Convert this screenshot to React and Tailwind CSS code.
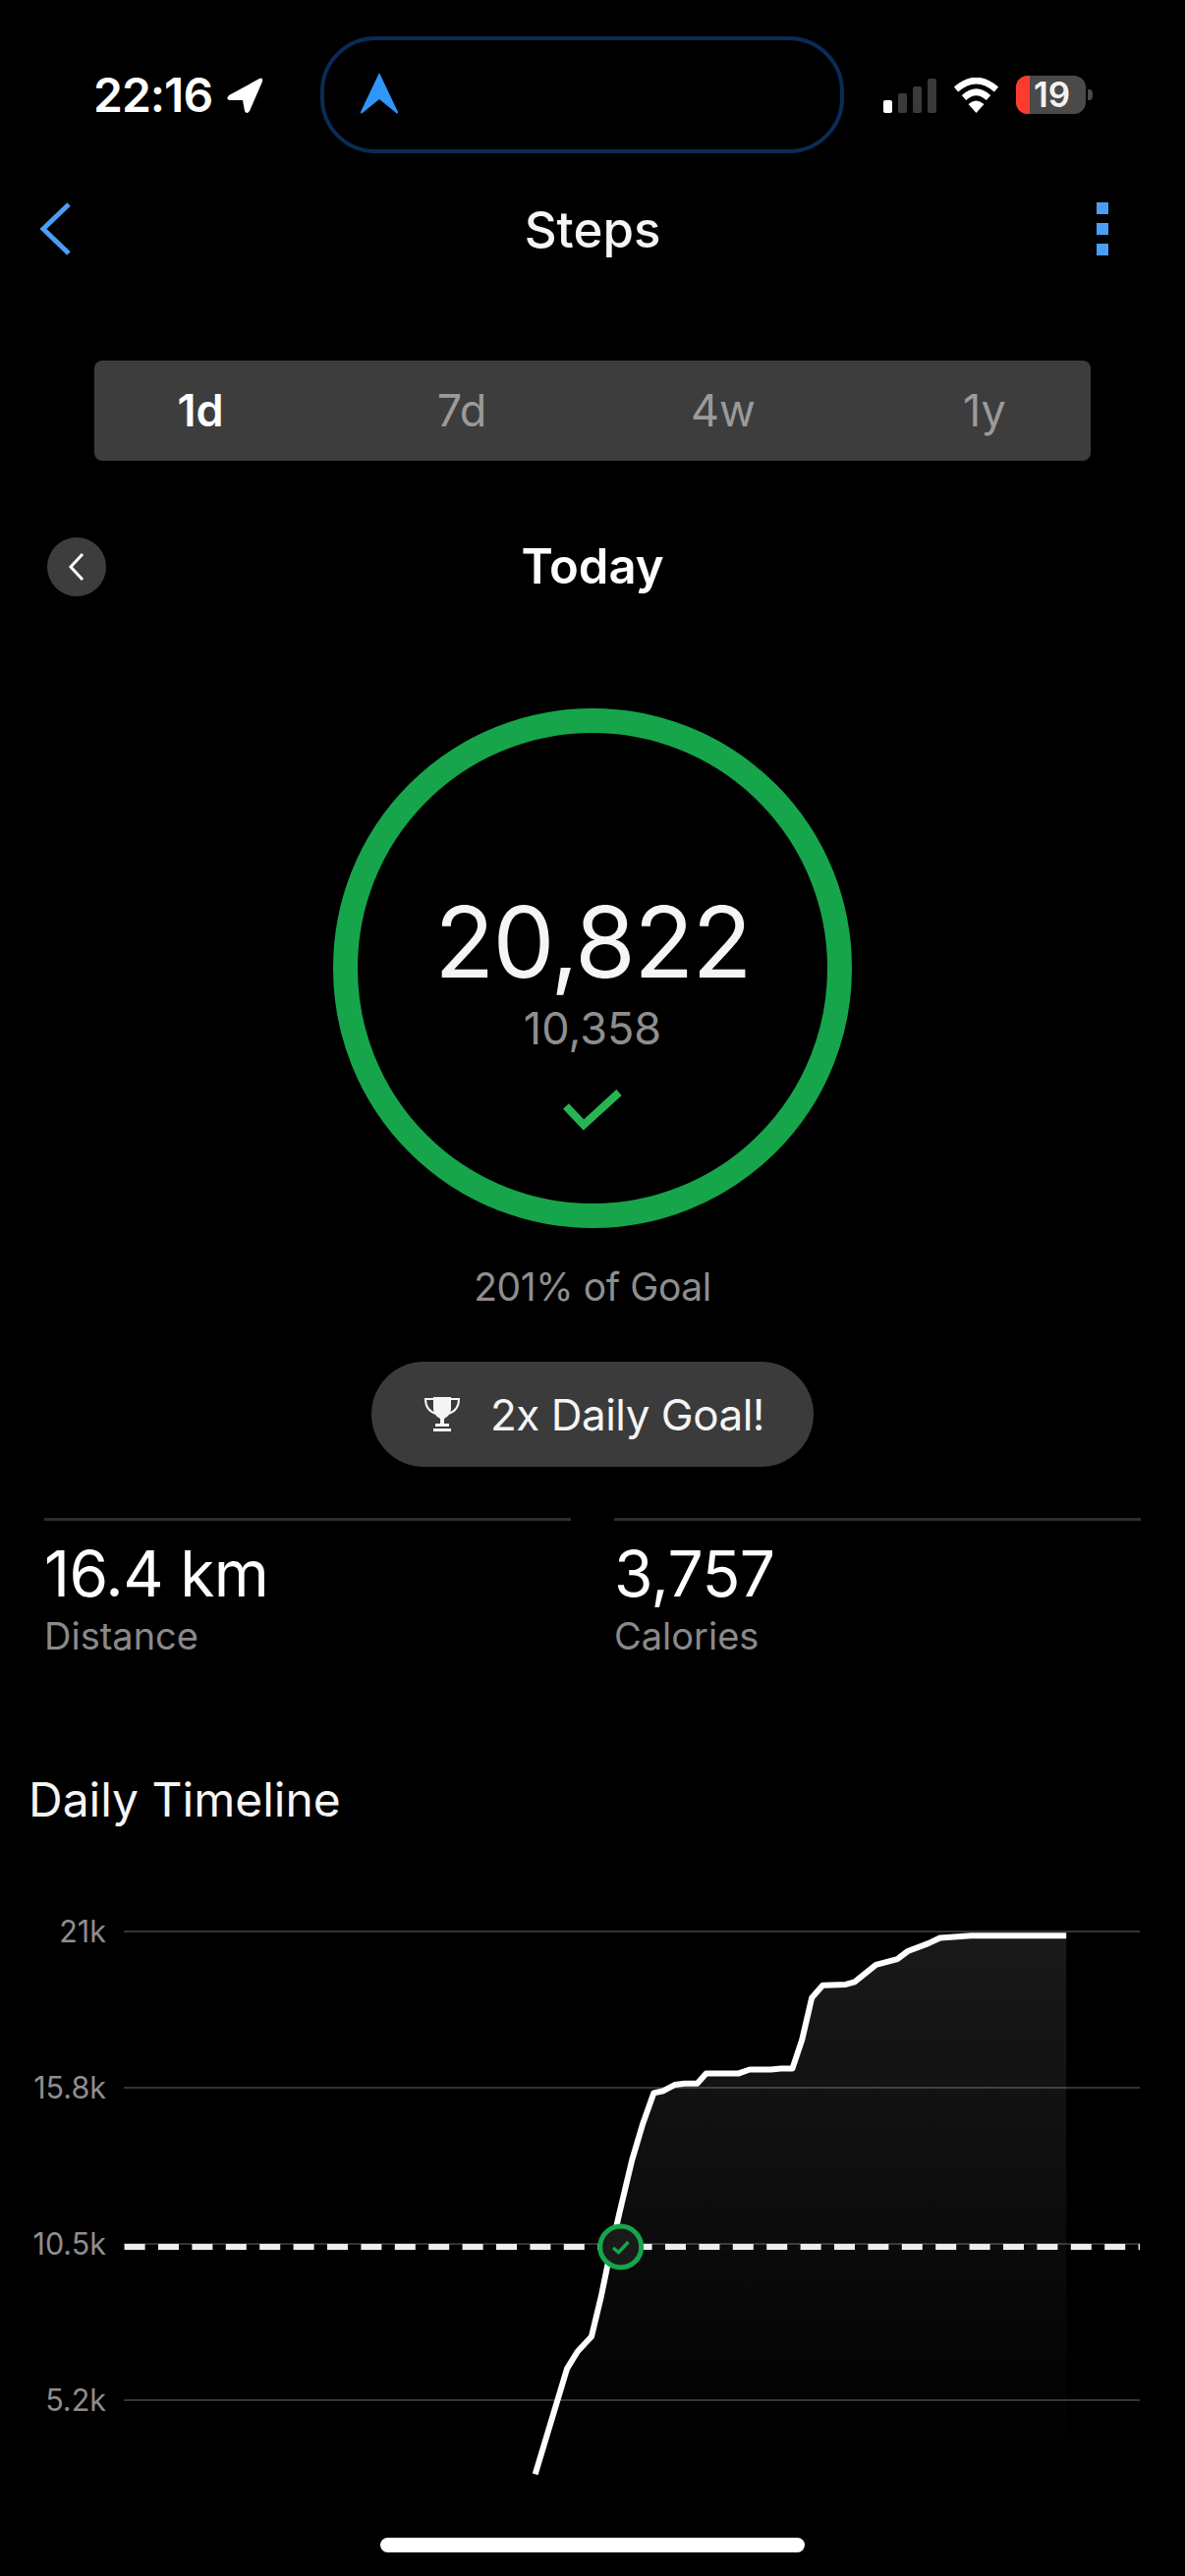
import React from 'react';

const linePoints = '544.7,2519.4 577.1,2411.9 587.8,2394.5 602,2379.3 611.9,2338 618.6,2305.4 630.5,2253.2 643.1,2200.1 654.2,2162.7 665.3,2131.4 675.2,2129.2 686.6,2123.1 696.9,2121.8 709.6,2121.8 718.7,2111.4 751.9,2111.4 763,2107.5 784.7,2107.5 794.6,2106.6 806.4,2106.6 816.3,2077 826.2,2034.4 837.3,2021.8 860.6,2020.9 869.7,2018.3 891.5,2000.9 913.2,1995.2 923.9,1987 944.8,1979.1 956.7,1973.5 988.3,1971.3 1085.2,1971.3';

function StatusBar() {
  return (
    <div className="flex h-[156px] items-center pt-[37px]">
      <div className="flex w-[326px] items-center pl-[95px]">
        <span className="text-[48px] leading-[48px] font-semibold tracking-[-1px] text-white">22:16</span>
        <svg className="ml-[14px]" width="38" height="38" viewBox="0 0 38 38">
          <path d="M34 2 L3 19 Q-1 23 4 24 L17 24 L19 35 Q21 39 24 35 L37 5 Q38 0 34 2 Z" fill="#fff" />
        </svg>
      </div>
      <div className="flex h-[119px] w-[533px] items-center rounded-[56px] border-[4px] border-[#0a2b55] pb-[3px] pl-[37px]">
        <svg width="38" height="42" viewBox="0 0 38 42">
          <path d="M19 0 L38 40 Q38 43 35 40 L19 27 L3 40 Q0 43 0 40 Z" fill="#2f96fa" />
        </svg>
      </div>
      <div className="flex flex-1 items-center pl-[40px]">
        <div className="flex h-[36px] items-end gap-[6px]">
          <div className="h-[13px] w-[9px] rounded-[2px] bg-white"></div>
          <div className="h-[20px] w-[9px] rounded-[2px] bg-[#3a3a3a]"></div>
          <div className="h-[27px] w-[9px] rounded-[2px] bg-[#3a3a3a]"></div>
          <div className="h-[35px] w-[9px] rounded-[2px] bg-[#3a3a3a]"></div>
        </div>
        <svg className="ml-[17px]" width="47" height="36" viewBox="0 0 47 36">
          <path d="M3 12 Q23.5 -6 44 12" fill="none" stroke="#fff" strokeWidth="6.5" />
          <path d="M11 20.5 Q23.5 9 36 20.5" fill="none" stroke="#fff" strokeWidth="6.5" />
          <path d="M15.5 27 Q23.5 20 31.5 27 L23.5 36 Z" fill="#fff" />
        </svg>
        <div className="ml-[17px] flex h-[39px] w-[71px] items-center rounded-[12px] bg-[#4a4a4a]">
          <div className="h-full w-[14px] rounded-l-[12px] bg-[#ff3b30]"></div>
          <span className="ml-[4px] text-[35px] leading-[39px] font-semibold text-[#f2f2f2]">19</span>
        </div>
        <div className="ml-[2px] h-[11px] w-[5px] rounded-r-[4px] bg-[#4a4a4a]"></div>
      </div>
    </div>
  );
}

function NavBar() {
  return (
    <div className="mt-[44px] flex h-[66px] items-center px-[39px]">
      <div className="flex-1">
        <svg width="34" height="54" viewBox="0 0 34 54">
          <path d="M31 2 L5 27 L31 52" fill="none" stroke="#4a9ff5" strokeWidth="5" />
        </svg>
      </div>
      <span className="pt-[2px] text-[51px] leading-[66px] font-medium text-[#f5f5f5]">Steps</span>
      <div className="flex flex-1 justify-end">
        <div className="mr-[39px] flex flex-col gap-[9px]">
          <div className="h-[12px] w-[12px] bg-[#4a9ff5]"></div>
          <div className="h-[12px] w-[12px] bg-[#4a9ff5]"></div>
          <div className="h-[12px] w-[12px] bg-[#4a9ff5]"></div>
        </div>
      </div>
    </div>
  );
}

function Stat({ value, label }) {
  return (
    <div className="w-[536px] border-t-[3px] border-[#2e2e2e] pt-[22px]">
      <div className="text-[64px] leading-[64px] tracking-[-0.6px] text-white">{value}</div>
      <div className="mt-[12px] text-[38px] leading-[38px] text-[#8a8a8a]">{label}</div>
    </div>
  );
}

function ChartRow({ label }) {
  return (
    <div className="flex h-[159px] items-center">
      <span className="w-[108px] text-right text-[30.5px] leading-[30px] text-[#8e8e8e]">{label}</span>
      <div className="ml-[18px] h-[2px] w-[1034px] bg-[#333333]"></div>
    </div>
  );
}

function Chart() {
  return (
    <div className="relative mt-[30px]">
      <ChartRow label="21k" />
      <ChartRow label="15.8k" />
      <ChartRow label="10.5k" />
      <ChartRow label="5.2k" />
      <svg className="absolute top-0 left-0" width="1206" height="735" viewBox="0 1887 1206 735">
        <defs>
          <linearGradient id="area" x1="0" y1="0" x2="0" y2="1">
            <stop offset="0" stopColor="#fff" stopOpacity="0.1" />
            <stop offset="1" stopColor="#fff" stopOpacity="0" />
          </linearGradient>
        </defs>
        <polygon points={`${linePoints} 1085.2,2519.4`} fill="url(#area)" />
        <line x1="126.6" y1="2288" x2="1160" y2="2288" stroke="#eeeeee" strokeWidth="6" strokeDasharray="21 13.4" />
        <polyline points={linePoints} fill="none" stroke="#fff" strokeWidth="6" strokeLinejoin="round" />
        <circle cx="631.7" cy="2288" r="21" fill="#1a1a1a" stroke="#16a54a" strokeWidth="5" />
        <path d="M624 2289 L629.5 2293.5 L639.5 2283" fill="none" stroke="#16a54a" strokeWidth="3.5" />
      </svg>
    </div>
  );
}

export default function App() {
  return (
    <div className="relative h-[2622px] w-[1206px] overflow-hidden bg-black font-['Inter',sans-serif]">
      <StatusBar />
      <NavBar />

      <div className="mx-[96px] mt-[101px] flex h-[102px] items-center justify-center rounded-[8px] bg-[#3d3d3d] text-[45px] leading-[44px] text-[#9a9a9a]">
        <span className="w-[266px] shrink-0 text-center font-semibold text-white">1d</span>
        <span className="w-[266px] shrink-0 text-center">7d</span>
        <span className="w-[266px] shrink-0 text-center">4w</span>
        <span className="w-[266px] shrink-0 text-center">1y</span>
      </div>

      <div className="relative mt-[78px] flex h-[60px] items-center justify-center">
        <div className="absolute left-[48px] flex h-[60px] w-[60px] items-center justify-center rounded-full bg-[#3d3d3d]">
          <svg width="18" height="30" viewBox="0 0 18 30">
            <path d="M15 2 L3 15 L15 28" fill="none" stroke="#fff" strokeWidth="3" />
          </svg>
        </div>
        <span className="text-[49px] leading-[60px] font-semibold text-white">Today</span>
      </div>

      <div className="mt-[114px] flex flex-col items-center">
        <div className="flex h-[529px] w-[528px] flex-col items-center rounded-full border-[25px] border-[#16a54a] pt-[163px]">
          <div className="text-[100px] leading-[100px] tracking-[-1.7px] text-[#f5f5f5]">20,822</div>
          <div className="mt-[16px] text-[45px] leading-[44px] text-[#8e8e8e]">10,358</div>
          <svg className="mt-[39px]" width="60" height="44" viewBox="0 0 60 44">
            <path d="M3 18 L21 37 L57 4" fill="none" stroke="#27b553" strokeWidth="8" />
          </svg>
        </div>
        <div className="mt-[40px] text-[39px] leading-[40px] tracking-[-0.4px] text-[#8e8e8e]">201% of Goal</div>
        <div className="mt-[56px] flex h-[107px] w-[450px] items-center rounded-full bg-[#3b3b3b] pl-[54px]">
          <svg width="36" height="37" viewBox="0 0 36 37">
            <path d="M9 1 H27 V12 C27 19 22 22 20 23 V28 H25 V31 H11 V28 H16 V23 C14 22 9 19 9 12 Z" fill="#f5f5f5" />
            <path d="M9 3 H1 C1 11 5 16 12 18 M27 3 H35 C35 11 31 16 24 18" fill="none" stroke="#f5f5f5" strokeWidth="2" />
            <rect x="9" y="33" width="18" height="3" fill="#f5f5f5" />
          </svg>
          <span className="ml-[31px] text-[44px] leading-[44px] tracking-[-0.5px] text-[#f5f5f5]">2x Daily Goal!</span>
        </div>
      </div>

      <div className="mt-[52px] flex justify-between pr-[45px] pl-[45px]">
        <Stat value="16.4 km" label="Distance" />
        <Stat value="3,757" label="Calories" />
      </div>

      <div className="mt-[124px] pl-[29px] text-[48px] leading-[48px] text-[#f5f5f5]">Daily Timeline</div>

      <Chart />

      <div className="absolute bottom-[24px] left-[387px] h-[15px] w-[432px] rounded-full bg-white"></div>
    </div>
  );
}
